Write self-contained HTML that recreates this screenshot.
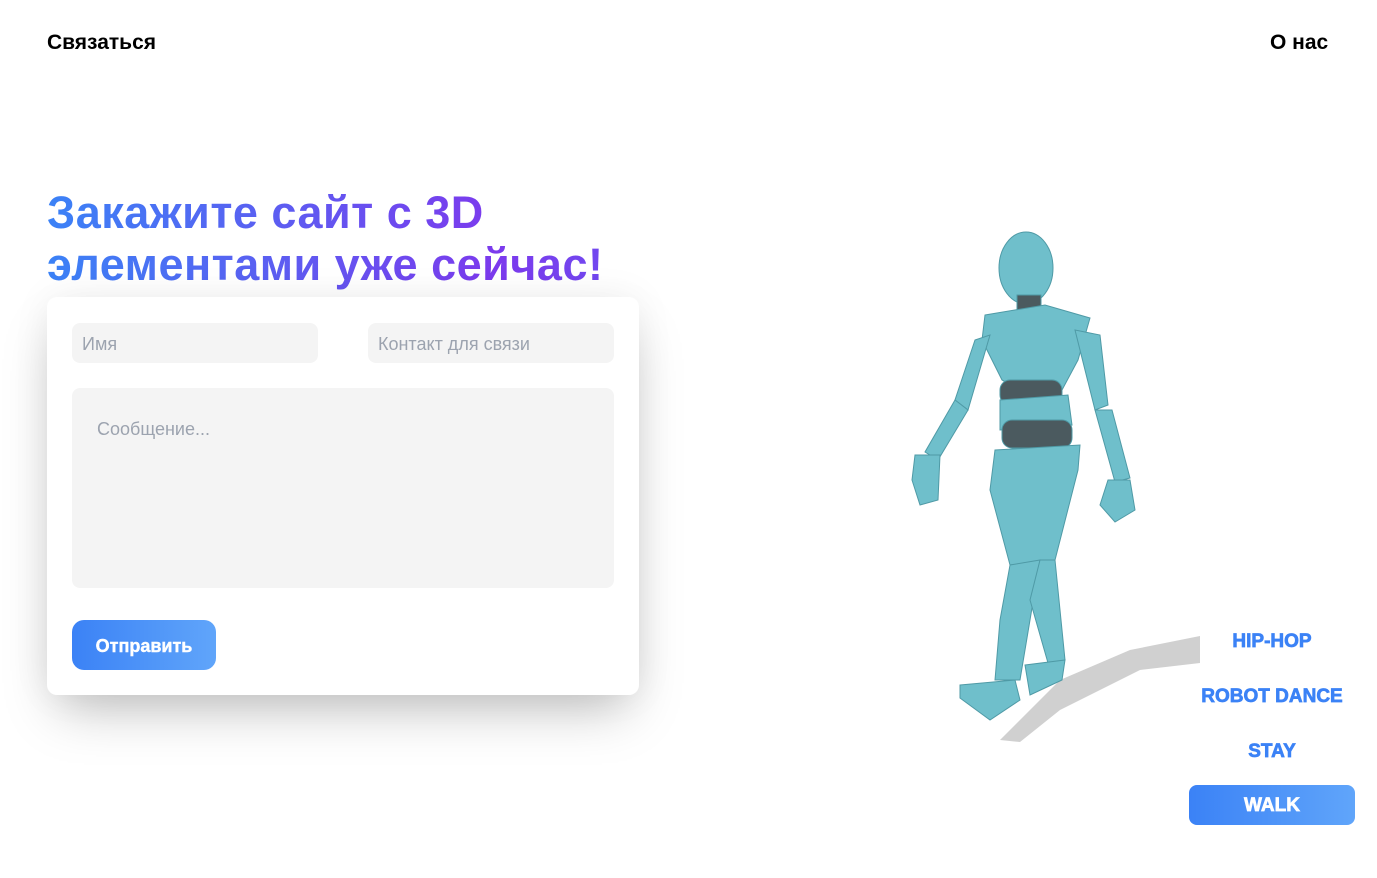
<!DOCTYPE html>
<html><head><meta charset="utf-8"><style>
*{margin:0;padding:0;box-sizing:border-box}
body{width:1377px;height:878px;background:#fff;font-family:"Liberation Sans","DejaVu Sans",sans-serif;position:relative;overflow:hidden}
.nav{position:absolute;top:31px;font-weight:bold;font-size:21px;color:#000}
h1{position:absolute;left:47px;top:187px;font-size:45px;line-height:52px;font-weight:900;width:600px;background:linear-gradient(90deg,#3b82f6,#7c3aed 75%,#6d4ef0);-webkit-background-clip:text;background-clip:text;color:transparent;letter-spacing:0.5px}
.card{position:absolute;left:47px;top:297px;width:592px;height:398px;background:#fff;border-radius:10px;box-shadow:0 25px 50px -12px rgba(0,0,0,.25),0 0 40px rgba(0,0,0,.06)}
.in{position:absolute;background:#f4f4f4;border-radius:8px;color:#9ca3af;font-size:18px}
.btn{position:absolute;left:25px;top:323px;width:144px;height:50px;border-radius:12px;background:linear-gradient(90deg,#3b82f6,#60a5fa);color:#fff;font-weight:bold;font-size:18px;text-align:center;line-height:52px;-webkit-text-stroke:0.4px #fff}
.opt{position:absolute;left:1189px;width:166px;height:40px;text-align:center;line-height:42px;font-weight:900;font-size:19px;color:#3b82f6;-webkit-text-stroke:0.7px #3b82f6}
</style></head><body>
<div class="nav" style="left:47px">Связаться</div>
<div class="nav" style="left:1270px">О нас</div>
<h1>Закажите сайт с 3D элементами уже сейчас!</h1>
<div class="card">
<div class="in" style="left:25px;top:26px;width:246px;height:40px;padding:11px 10px">Имя</div>
<div class="in" style="left:321px;top:26px;width:246px;height:40px;padding:11px 10px">Контакт для связи</div>
<div class="in" style="left:25px;top:91px;width:542px;height:200px;padding:31px 25px">Сообщение...</div>
<div class="btn">Отправить</div>
</div>
<svg style="position:absolute;left:900px;top:225px" width="300" height="530" viewBox="900 225 300 530">
<path d="M1000 740 L1060 680 L1130 650 L1220 632 L1225 660 L1140 670 L1060 710 L1020 742Z" fill="#d0d0d0"/>
<g fill="#6fbfcb" stroke="#4f9aa6" stroke-width="1">
<ellipse cx="1026" cy="268" rx="27" ry="36"/>
<rect x="1017" y="295" width="24" height="18" fill="#4b5a5f"/>
<path d="M985 315 L1045 305 L1090 318 L1078 360 L1062 390 L1030 395 L1002 380 L982 340Z"/>
<rect x="1000" y="380" width="62" height="25" rx="10" fill="#4b5a5f"/>
<path d="M1000 400 L1068 395 L1072 425 L1000 430Z"/>
<rect x="1002" y="420" width="70" height="28" rx="10" fill="#4b5a5f"/>
<path d="M995 450 L1080 445 L1078 470 L1055 560 L1010 565 L990 490Z"/>
<path d="M975 340 L990 335 L968 410 L955 400Z"/>
<path d="M955 400 L968 410 L938 460 L925 452Z"/>
<path d="M915 455 L940 455 L938 500 L920 505 L912 480Z"/>
<path d="M1075 330 L1100 335 L1108 405 L1095 410Z"/>
<path d="M1095 410 L1112 410 L1130 478 L1115 482Z"/>
<path d="M1108 480 L1130 480 L1135 510 L1115 522 L1100 505Z"/>
<path d="M1010 565 L1040 560 L1030 620 L1020 680 L995 680 L1000 620Z"/>
<path d="M1040 560 L1055 560 L1065 660 L1050 670 L1030 600Z"/>
<path d="M960 685 L1015 680 L1020 700 L990 720 L960 698Z"/>
<path d="M1025 665 L1065 660 L1062 680 L1030 695Z"/>
</g>
</svg>
<div class="opt" style="top:621px">HIP-HOP</div>
<div class="opt" style="top:676px">ROBOT DANCE</div>
<div class="opt" style="top:731px">STAY</div>
<div class="opt" style="top:785px;background:linear-gradient(90deg,#3b82f6,#60a5fa);color:#fff;-webkit-text-stroke:0.7px #fff;border-radius:8px">WALK</div>
</body></html>
